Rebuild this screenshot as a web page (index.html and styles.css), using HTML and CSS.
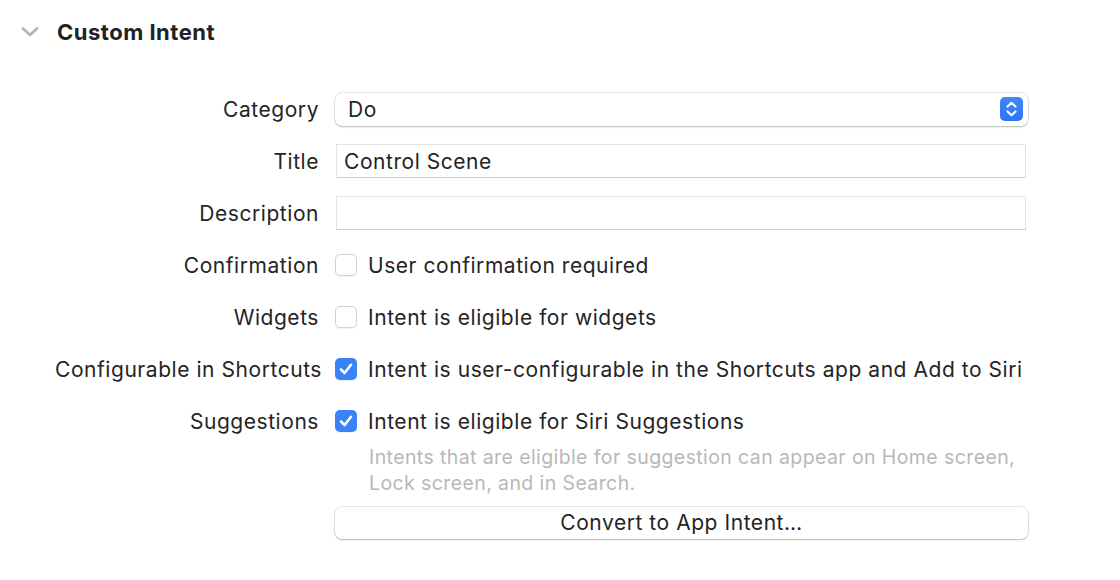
FILE: index.html
```html
<!DOCTYPE html>
<html>
<head>
<meta charset="utf-8">
<link rel="stylesheet" href="styles.css">
</head>
<body>
<div class="panel">
  <div class="header">
    <svg class="chevron" width="18" height="12" viewBox="0 0 18 12"><path d="M2 2.5 L9 9 L16 2.5" fill="none" stroke="#b3b3b3" stroke-width="2.6" stroke-linecap="round" stroke-linejoin="round"/></svg>
    <span class="title">Custom Intent</span>
  </div>
  <div class="form">
    <div class="label">Category</div>
    <div class="popup">
      <span>Do</span>
      <span class="stepper">
        <svg width="23" height="24" viewBox="0 0 23 24"><path d="M7.5 9.5 L11.5 5.8 L15.5 9.5 M7.5 14.5 L11.5 18.2 L15.5 14.5" fill="none" stroke="#fff" stroke-width="2.2" stroke-linecap="round" stroke-linejoin="round"/></svg>
      </span>
    </div>

    <div class="label">Title</div>
    <div class="field">Control Scene</div>

    <div class="label">Description</div>
    <div class="field"></div>

    <div class="label">Confirmation</div>
    <div class="check-row"><span class="box"></span><span>User confirmation required</span></div>

    <div class="label">Widgets</div>
    <div class="check-row"><span class="box"></span><span>Intent is eligible for widgets</span></div>

    <div class="label wide">Configurable in Shortcuts</div>
    <div class="check-row"><span class="box checked"><svg width="22" height="22" viewBox="0 0 22 22"><path d="M6 11.5 L9.6 15 L16 6.8" fill="none" stroke="#fff" stroke-width="2.6" stroke-linecap="round" stroke-linejoin="round"/></svg></span><span>Intent is user-configurable in the Shortcuts app and Add to Siri</span></div>

    <div class="label">Suggestions</div>
    <div class="check-row"><span class="box checked"><svg width="22" height="22" viewBox="0 0 22 22"><path d="M6 11.5 L9.6 15 L16 6.8" fill="none" stroke="#fff" stroke-width="2.6" stroke-linecap="round" stroke-linejoin="round"/></svg></span><span>Intent is eligible for Siri Suggestions</span></div>

    <div class="spacer"></div>
    <div class="help">Intents that are eligible for suggestion can appear on Home screen,<br>Lock screen, and in Search.</div>

    <div class="spacer"></div>
    <div class="button">Convert to App Intent…</div>
  </div>
</div>
</body>
</html>
```
FILE: styles.css
```css
html, body {
  margin: 0;
  padding: 0;
  background: #ffffff;
}
body {
  font-family: "Inter", "Noto Sans", sans-serif;
  color: #242424;
  width: 1120px;
  height: 580px;
  overflow: hidden;
}
.header {
  display: flex;
  align-items: center;
  height: 64px;
  padding-left: 21px;
}
.chevron {
  margin-right: 18px;
}
.title {
  font-weight: 700;
  font-size: 22px;
  color: #222;
  letter-spacing: 0.5px;
}
.form {
  display: grid;
  grid-template-columns: 320px 693px;
  column-gap: 15px;
  row-gap: 18px;
  margin-top: 28px;
  align-items: center;
  font-size: 21px;
  letter-spacing: 0.55px;
}
.label {
  text-align: right;
  height: 34px;
  line-height: 36px;
  white-space: nowrap;
  margin-right: 1px;
}
.label.wide {
  margin-right: -2px;
}
.popup {
  height: 33px;
  border-radius: 7px;
  background: #fff;
  box-shadow: 0 0 0 0.5px rgba(0,0,0,0.16), 0 1px 2px rgba(0,0,0,0.22);
  display: flex;
  align-items: center;
  justify-content: space-between;
  padding-left: 13px;
  padding-right: 5px;
}
.stepper {
  width: 23px;
  height: 24px;
  border-radius: 5px;
  background: linear-gradient(#3f87fb, #2f74f3);
  display: flex;
}
.field {
  width: 690px;
  margin-left: 1px;
  height: 34px;
  box-sizing: border-box;
  border: 1px solid #e4e4e4;
  border-bottom-color: #c9c9c9;
  padding-left: 7px;
  line-height: 33px;
}
.check-row {
  display: flex;
  align-items: center;
  gap: 11px;
  height: 34px;
  white-space: nowrap;
}
.box {
  width: 22px;
  height: 22px;
  box-sizing: border-box;
  border-radius: 5px;
  background: #fff;
  border: 1px solid #d2d2d2;
  box-shadow: 0 0.5px 1px rgba(0,0,0,0.06);
  flex: none;
  display: flex;
}
.box.checked {
  border: none;
  background: #3a82f7;
}
.spacer {
  height: 0;
}
.help {
  margin-top: -12px;
  padding-left: 34px;
  font-size: 19.5px;
  letter-spacing: 0.4px;
  line-height: 26px;
  color: #b8b8b8;
  white-space: nowrap;
}
.button {
  margin-top: -7px;
  height: 32px;
  border-radius: 7px;
  background: #fff;
  box-shadow: 0 0 0 0.5px rgba(0,0,0,0.16), 0 1px 2px rgba(0,0,0,0.22);
  text-align: center;
  line-height: 32px;
}
```
